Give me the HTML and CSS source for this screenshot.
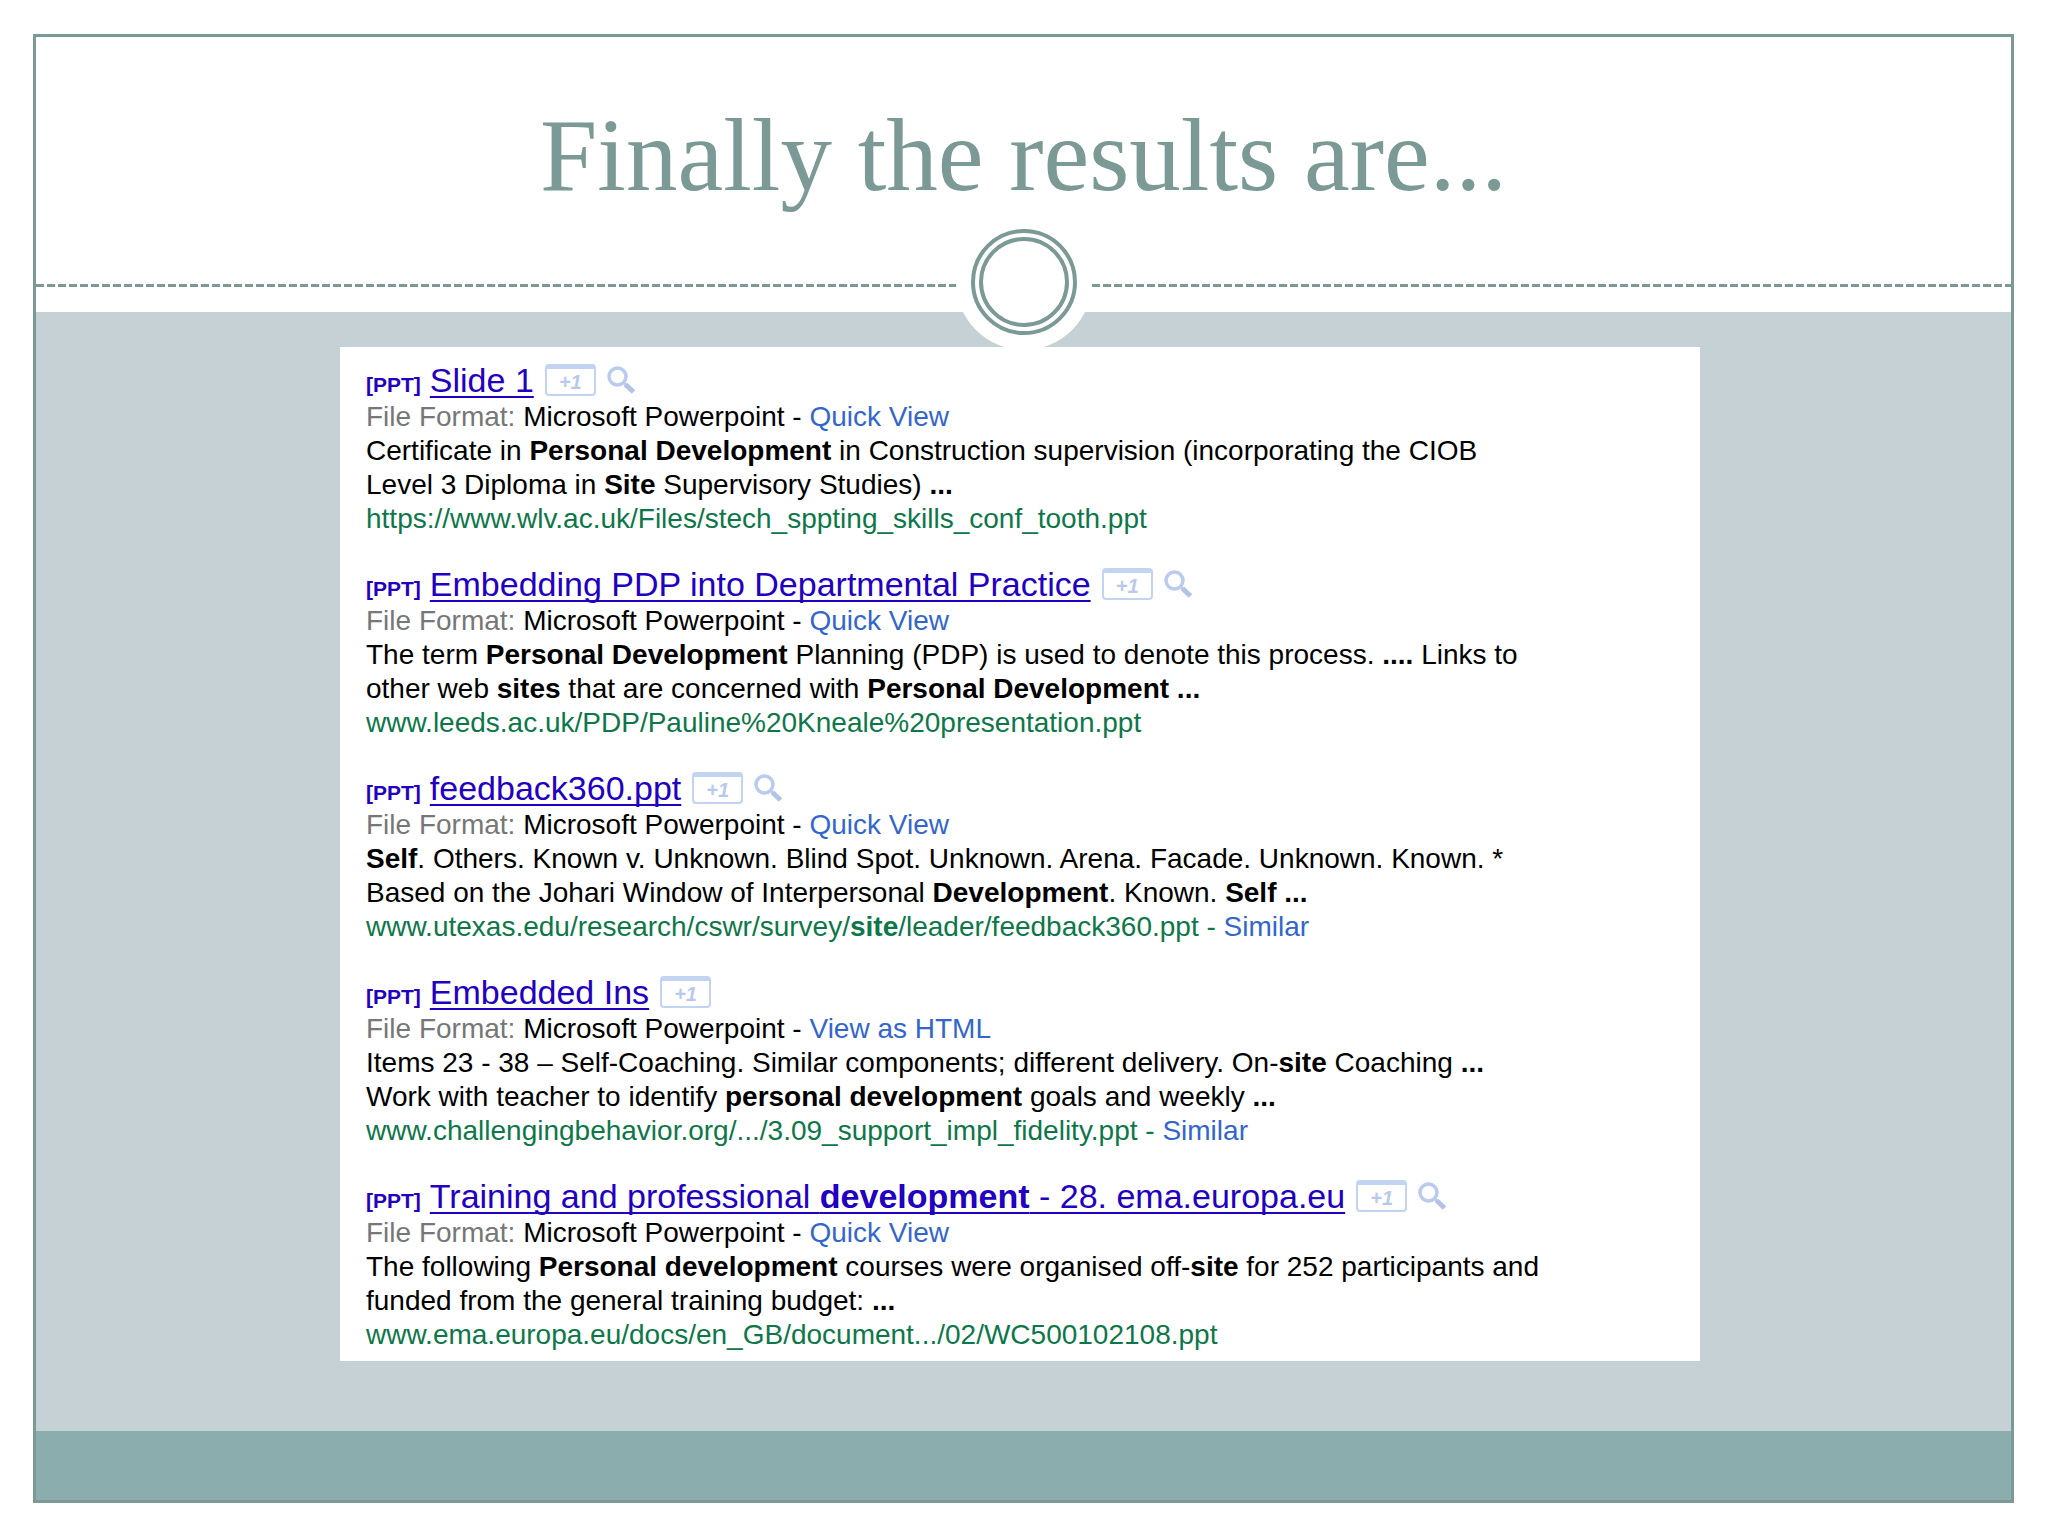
FILE: index.html
```html
<!DOCTYPE html>
<html lang="en">
<head>
<meta charset="utf-8">
<title>Finally the results are...</title>
<link rel="stylesheet" href="styles.css">
</head>
<body>
<svg class="defs" aria-hidden="true">
  <symbol id="lens" viewBox="0 0 28 28">
    <path d="M16 16 19 19" stroke="#b9cbee" stroke-width="3"/>
    <path d="M18.5 18.5 26.5 26" stroke="#b3c3e8" stroke-width="5"/>
    <circle cx="10.5" cy="10.5" r="8.5" fill="#fff" stroke="#b9cbee" stroke-width="3.5"/>
  </symbol>
</svg>
<div class="slide">
  <header class="head">
    <h1 class="title">Finally the results are...</h1>
    <div class="rule"></div>
    <svg class="ring" viewBox="0 0 136 136" aria-hidden="true">
      <circle cx="68" cy="68" r="68" fill="#fff"/>
      <circle cx="68" cy="68" r="51" fill="none" stroke="#7b9a95" stroke-width="4"/>
      <circle cx="68" cy="68" r="43" fill="none" stroke="#7b9a95" stroke-width="4"/>
    </svg>
  </header>
  <main class="stage">
    <div class="results">
      <article class="result">
        <h2 class="heading"><span class="tag">[PPT]</span><a class="name" href="#">Slide 1</a><button class="plus" type="button">+1</button><button class="preview" type="button" aria-label="Preview"><svg><use href="#lens"/></svg></button></h2>
        <p class="line"><span class="label">File Format:</span> Microsoft Powerpoint - <a class="view" href="#">Quick View</a></p>
        <p class="line">Certificate in <b>Personal Development</b> in Construction supervision (incorporating the CIOB<br>Level 3 Diploma in <b>Site</b> Supervisory Studies) <b>...</b></p>
        <p class="line url">https://www.wlv.ac.uk/Files/stech_sppting_skills_conf_tooth.ppt</p>
      </article>
      <article class="result">
        <h2 class="heading"><span class="tag">[PPT]</span><a class="name" href="#">Embedding PDP into Departmental Practice</a><button class="plus" type="button">+1</button><button class="preview" type="button" aria-label="Preview"><svg><use href="#lens"/></svg></button></h2>
        <p class="line"><span class="label">File Format:</span> Microsoft Powerpoint - <a class="view" href="#">Quick View</a></p>
        <p class="line">The term <b>Personal Development</b> Planning (PDP) is used to denote this process. <b>....</b> Links to<br>other web <b>sites</b> that are concerned with <b>Personal Development ...</b></p>
        <p class="line url">www.leeds.ac.uk/PDP/Pauline%20Kneale%20presentation.ppt</p>
      </article>
      <article class="result">
        <h2 class="heading"><span class="tag">[PPT]</span><a class="name" href="#">feedback360.ppt</a><button class="plus" type="button">+1</button><button class="preview" type="button" aria-label="Preview"><svg><use href="#lens"/></svg></button></h2>
        <p class="line"><span class="label">File Format:</span> Microsoft Powerpoint - <a class="view" href="#">Quick View</a></p>
        <p class="line"><b>Self</b>. Others. Known v. Unknown. Blind Spot. Unknown. Arena. Facade. Unknown. Known. *<br>Based on the Johari Window of Interpersonal <b>Development</b>. Known. <b>Self ...</b></p>
        <p class="line url">www.utexas.edu/research/cswr/survey/<b>site</b>/leader/feedback360.ppt - <a class="view" href="#">Similar</a></p>
      </article>
      <article class="result">
        <h2 class="heading"><span class="tag">[PPT]</span><a class="name" href="#">Embedded Ins</a><button class="plus" type="button">+1</button></h2>
        <p class="line"><span class="label">File Format:</span> Microsoft Powerpoint - <a class="view" href="#">View as HTML</a></p>
        <p class="line">Items 23 - 38 – Self-Coaching. Similar components; different delivery. On-<b>site</b> Coaching <b>...</b><br>Work with teacher to identify <b>personal development</b> goals and weekly <b>...</b></p>
        <p class="line url">www.challengingbehavior.org/.../3.09_support_impl_fidelity.ppt - <a class="view" href="#">Similar</a></p>
      </article>
      <article class="result">
        <h2 class="heading"><span class="tag">[PPT]</span><a class="name" href="#">Training and professional <b>development</b> - 28. ema.europa.eu</a><button class="plus" type="button">+1</button><button class="preview" type="button" aria-label="Preview"><svg><use href="#lens"/></svg></button></h2>
        <p class="line"><span class="label">File Format:</span> Microsoft Powerpoint - <a class="view" href="#">Quick View</a></p>
        <p class="line">The following <b>Personal development</b> courses were organised off-<b>site</b> for 252 participants and<br>funded from the general training budget: <b>...</b></p>
        <p class="line url">www.ema.europa.eu/docs/en_GB/document.../02/WC500102108.ppt</p>
      </article>
    </div>
  </main>
  <footer class="foot"></footer>
</div>
</body>
</html>
```
FILE: styles.css
```css
* { box-sizing: border-box; }

body {
  margin: 0;
  min-height: 100vh;
  padding: 34px 34px 33px 33px;
  display: flex;
  background: #fff;
  font-family: "Liberation Sans", Arial, sans-serif;
  color: #000;
}

.defs { position: absolute; width: 0; height: 0; }

.slide {
  flex: 1;
  display: flex;
  flex-direction: column;
  border: 3px solid #7b9a95;
}

.head {
  position: relative;
  padding: 58px 0 25px;
}

.title {
  margin: 0;
  padding-bottom: 69px;
  font: 400 103px/120px Georgia, "Liberation Serif", serif;
  text-align: center;
  color: #7b9a95;
}

.rule {
  height: 3px;
  background: repeating-linear-gradient(90deg, #7b9a95 0 8px, #fff 8px 11px);
}

/* The ring straddles the header and the stage */
.ring {
  position: absolute;
  left: 50%;
  bottom: -38px;
  width: 136px;
  height: 136px;
  margin-left: -68px;
}

.stage {
  flex: 1;
  padding: 35px 311px 70px 304px;
  background: #c5d1d4;
}

.results {
  display: flex;
  flex-direction: column;
  gap: 28px;
  padding: 13px 26px 0;
  min-height: 1014px;
  background: #fff;
}

.heading {
  display: flex;
  align-items: baseline;
  gap: 11px;
  height: 40px;
  margin: 0;
  font-size: 34px;
  font-weight: 400;
  line-height: 40px;
  white-space: nowrap;
}

.tag {
  margin-right: -2px;
  font-size: 21px;
  font-weight: 700;
  color: #2200c1;
}

.name {
  color: #2200c1;
  text-decoration-thickness: 2px;
  text-underline-offset: 4px;
  text-decoration-skip-ink: none;
}

.plus {
  align-self: center;
  width: 51px;
  height: 32px;
  padding: 0;
  border: 2px solid #c3d3f2;
  border-top-width: 5px;
  border-radius: 4px;
  background: #fff;
  font: italic 700 20px/24px "Liberation Sans", Arial, sans-serif;
  color: #b9c9ec;
}

.preview {
  align-self: center;
  width: 28px;
  height: 28px;
  padding: 0;
  border: 0;
  background: none;
}

.preview svg { display: block; width: 28px; height: 28px; }

.line {
  margin: 0;
  font-size: 28px;
  line-height: 34px;
  white-space: nowrap;
}

.label { color: #777; }
.view { color: #3366cc; text-decoration: none; }
.url { color: #0e774a; }

.foot {
  height: 69px;
  background: #8badad;
}
```
